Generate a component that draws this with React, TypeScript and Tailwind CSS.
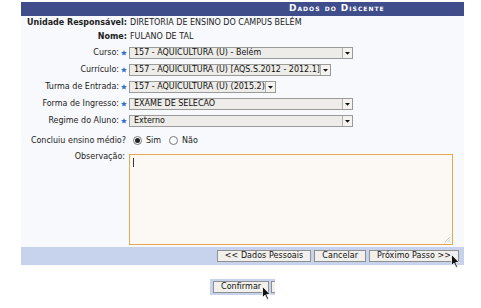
import React from "react";

const font = { fontFamily: '"DejaVu Sans", Verdana, sans-serif' };

function Select({ w, text }: { w: string; text: string }) {
  return (
    <div className={`${w} h-[12px] flex border border-[#9a9a9a] bg-[#edece8] overflow-hidden`}>
      <div className="flex-1 overflow-hidden whitespace-nowrap pl-[4px] text-[8px] leading-[10px] text-[#111]">{text}</div>
      <div className="w-[10px] h-[10px] border-l border-[#b0b0b0] bg-[#f4f3f0] flex items-center justify-center">
        <svg width="5" height="4" viewBox="0 0 5 4"><path d="M0 1h5L2.5 3.8z" fill="#111" /></svg>
      </div>
    </div>
  );
}

function Star() {
  return (
    <span className="w-[10px] flex justify-center">
      <svg width="6" height="6" viewBox="0 0 10 10"><path d="M5 0l1.4 3.2 3.6.3-2.7 2.3.8 3.5L5 7.5 1.9 9.3l.8-3.5L0 3.5l3.6-.3z" fill="#3b6fc4" /></svg>
    </span>
  );
}

function Row({ label, children, h = "h-[17px]" }: { label: string; children: React.ReactNode; h?: string }) {
  return (
    <div className={`flex items-center ${h}`}>
      <div className="w-[98px] text-right text-[8px] text-[#222] whitespace-nowrap">{label}</div>
      <Star />
      {children}
    </div>
  );
}

function Cursor() {
  return (
    <svg width="9" height="14" viewBox="0 0 9 14">
      <path d="M0.5 0.5v11l2.6-2.4 1.9 4.3 1.6-.7-1.9-4.2h3.5z" fill="#111" stroke="#fff" strokeWidth="0.8" />
    </svg>
  );
}

function Btn({ children, cls = "" }: { children: React.ReactNode; cls?: string }) {
  return (
    <div className={`h-[12px] px-[7px] flex items-center border border-[#8f8f8f] bg-[#f1f0ec] text-[8px] tracking-[0.05px] text-[#111] whitespace-nowrap ${cls}`}>
      {children}
    </div>
  );
}

export default function App() {
  return (
    <div className="relative w-[481px] h-[308px] bg-white overflow-hidden" style={font}>
      <div className="ml-[21px] mt-[2px] w-[443px]">
        <div className="h-[14px] bg-[#3f4d8a] flex items-center pl-[268px]">
          <span className="text-white text-[9px] font-bold tracking-[1px]" style={{ fontVariant: "small-caps" }}>Dados do Discente</span>
        </div>
        <div className="bg-[#f8f9fc]">
          <div className="flex items-center h-[14px] text-[8px] text-[#222]">
            <div className="w-[106px] text-right font-bold whitespace-nowrap">Unidade Responsável:</div>
            <div className="ml-[3px] whitespace-nowrap">DIRETORIA DE ENSINO DO CAMPUS BELÉM</div>
          </div>
          <div className="flex items-center h-[14px] text-[8px] text-[#222]">
            <div className="w-[106px] text-right font-bold whitespace-nowrap">Nome:</div>
            <div className="ml-[3px] whitespace-nowrap">FULANO DE TAL</div>
          </div>
          <Row label="Curso:"><Select w="w-[224px]" text="157 - AQUICULTURA (U) - Belém" /></Row>
          <Row label="Currículo:"><Select w="w-[202px]" text="157 - AQUICULTURA (U) [AQS.S.2012 - 2012.1]" /></Row>
          <Row label="Turma de Entrada:"><Select w="w-[147px]" text="157 - AQUICULTURA (U) (2015.2)" /></Row>
          <Row label="Forma de Ingresso:"><Select w="w-[224px]" text="EXAME DE SELECAO" /></Row>
          <Row label="Regime do Aluno:"><Select w="w-[224px]" text="Externo" /></Row>
          <div className="flex items-center h-[23px] text-[8px] text-[#222]">
            <div className="w-[105px] text-right whitespace-nowrap">Concluiu ensino médio?</div>
            <div className="ml-[7px] w-[9px] h-[9px] rounded-full border border-[#777] bg-white flex items-center justify-center">
              <div className="w-[5px] h-[5px] rounded-full bg-[#222]" />
            </div>
            <span className="ml-[4px]">Sim</span>
            <div className="ml-[8px] w-[9px] h-[9px] rounded-full border border-[#777] bg-white" />
            <span className="ml-[4px]">Não</span>
          </div>
          <div className="flex items-start pb-[2px]">
            <div className="w-[104px] text-right text-[8px] text-[#222] whitespace-nowrap mt-[-1px]">Observação:</div>
            <div className="relative ml-[4px] mt-[2px] w-[324px] h-[91px] border border-[#e6a94f] bg-[#fcf9f4]">
              <div className="absolute left-[3px] top-[3px] w-px h-[9px] bg-[#333]" />
              <svg className="absolute right-[1px] bottom-[1px]" width="7" height="7" viewBox="0 0 7 7">
                <path d="M6 1L1 6M6 3.5L3.5 6M6 5.5L5.5 6" stroke="#bbb" strokeWidth="0.8" />
              </svg>
            </div>
          </div>
        </div>
        <div className="h-[18px] bg-[#c7d2ec] flex items-center justify-end gap-[3px] pr-[5px]">
          <Btn>&lt;&lt; Dados Pessoais</Btn>
          <Btn>Cancelar</Btn>
          <Btn>Próximo Passo &gt;&gt;</Btn>
        </div>
      </div>
      <div className="ml-[210px] mt-[14px] w-[65px] h-[16px] bg-[#c7d2ec] flex items-center pl-[3px] gap-[2px]">
        <Btn cls="px-[6px]">Confirmar</Btn>
        <div className="w-[5px] h-[12px] border border-[#8f8f8f] border-r-0 bg-[#f1f0ec]" />
      </div>
      <div className="absolute left-[451px] top-[254px]"><Cursor /></div>
      <div className="absolute left-[262px] top-[286px]"><Cursor /></div>
    </div>
  );
}
